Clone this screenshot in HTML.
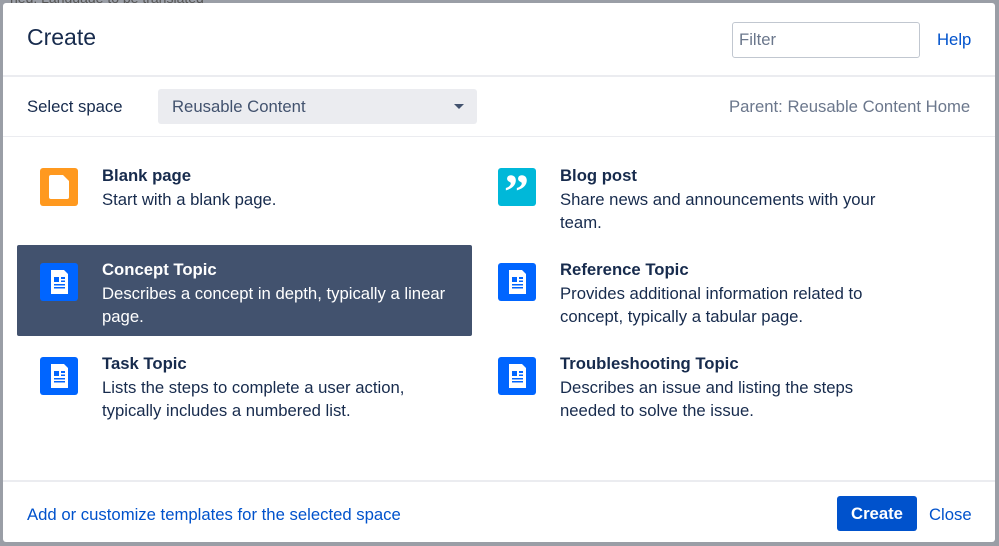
<!DOCTYPE html>
<html><head><style>
body{margin:0;width:999px;height:546px;background:#9a9ea6;font-family:"Liberation Sans",sans-serif;position:relative;overflow:hidden;color:#172b4d}
.dlg{position:absolute;left:3px;top:3px;width:992px;height:539px;background:#fff;border-radius:3px}
.a{position:absolute}
.t{font-size:16.7px;line-height:23px}
.b{font-weight:bold}
.ico{position:absolute;width:38px;height:38px;border-radius:3px}
.lnk{color:#0052cc}
</style></head><body>
<div class="a" style="left:10px;top:-10px;font-size:14px;color:#555">ned: Language to be translated</div>
<div class="dlg">
<div class="a" style="left:24px;top:21px;font-size:23px;color:#172b4d">Create</div>
<div class="a" style="left:729px;top:19px;width:186px;height:34px;border:1px solid #c1c7d0;border-radius:3px"></div>
<div class="a t" style="left:736px;top:25px;color:#6b778c">Filter</div>
<div class="a t lnk" style="left:934px;top:25px">Help</div>
<div class="a" style="left:0;top:72px;width:992px;height:2px;background:#ebecf0"></div>
<div class="a t" style="left:24px;top:92px">Select space</div>
<div class="a" style="left:155px;top:86px;width:319px;height:35px;background:#ebecf0;border-radius:3px"></div>
<div class="a t" style="left:169px;top:92px;color:#42526e">Reusable Content</div>
<div class="a" style="left:451px;top:101px;width:0;height:0;border-left:5px solid transparent;border-right:5px solid transparent;border-top:5px solid #42526e"></div>
<div class="a t" style="left:726px;top:92px;color:#6b778c">Parent: Reusable Content Home</div>
<div class="a" style="left:0;top:133px;width:992px;height:1px;background:#ebecf0"></div>

<div class="a" style="left:14px;top:242px;width:455px;height:91px;background:#42526e;border-radius:2px"></div>

<div class="ico" style="left:37px;top:165px;background:#ff991f"><div class="a" style="left:9px;top:7px;width:20px;height:24px;background:#fff;border-radius:2px;clip-path:polygon(0 0,70% 0,100% 25%,100% 100%,0 100%)"></div></div>
<div class="a t b" style="left:99px;top:161px">Blank page</div>
<div class="a t" style="left:99px;top:185px">Start with a blank page.</div>

<div class="ico" style="left:495px;top:165px;background:#00b8d9"><div class="a" style="left:6px;top:-6px;color:#fff;font:bold 50px 'Liberation Serif',serif">&#8221;</div></div>
<div class="a t b" style="left:557px;top:161px">Blog post</div>
<div class="a t" style="left:557px;top:185px;width:340px">Share news and announcements with your team.</div>

<div class="ico" style="left:37px;top:260px;background:#0065ff"></div>
<div class="ico" style="left:495px;top:260px;background:#0065ff"></div>
<div class="ico" style="left:37px;top:354px;background:#0065ff"></div>
<div class="ico" style="left:495px;top:354px;background:#0065ff"></div>
<svg class="a" style="left:0;top:0" width="992" height="539">
<defs><g id="d"><path d="M11 7h13l4 4v20H11z" fill="#fff"/><rect x="14" y="14" width="5" height="5" fill="#0065ff"/><rect x="21" y="14" width="4" height="2" fill="#0065ff"/><rect x="21" y="17.5" width="4" height="1.5" fill="#0065ff"/><rect x="14" y="21" width="11" height="1.5" fill="#0065ff"/><rect x="14" y="24" width="11" height="1.5" fill="#0065ff"/></g></defs>
<use href="#d" x="37" y="260"/><use href="#d" x="495" y="260"/><use href="#d" x="37" y="354"/><use href="#d" x="495" y="354"/>
</svg>

<div class="a t b" style="left:99px;top:255px;color:#fff">Concept Topic</div>
<div class="a t" style="left:99px;top:279px;width:370px;color:#fff">Describes a concept in depth, typically a linear page.</div>
<div class="a t b" style="left:557px;top:255px">Reference Topic</div>
<div class="a t" style="left:557px;top:279px;width:330px">Provides additional information related to concept, typically a tabular page.</div>
<div class="a t b" style="left:99px;top:349px">Task Topic</div>
<div class="a t" style="left:99px;top:373px;width:340px">Lists the steps to complete a user action, typically includes a numbered list.</div>
<div class="a t b" style="left:557px;top:349px">Troubleshooting Topic</div>
<div class="a t" style="left:557px;top:373px;width:330px">Describes an issue and listing the steps needed to solve the issue.</div>

<div class="a" style="left:0;top:477px;width:992px;height:2px;background:#ebecf0"></div>
<div class="a t lnk" style="left:24px;top:500px">Add or customize templates for the selected space</div>
<div class="a" style="left:834px;top:493px;width:80px;height:35px;background:#0052cc;border-radius:3px;color:#fff;font-weight:bold;font-size:16.7px;line-height:36px;text-align:center">Create</div>
<div class="a t lnk" style="left:926px;top:500px">Close</div>
</div>
</body></html>
